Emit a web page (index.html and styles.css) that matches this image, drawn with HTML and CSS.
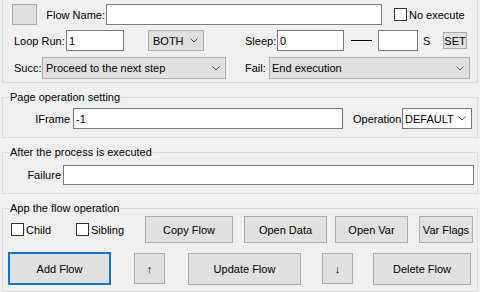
FILE: index.html
```html
<!DOCTYPE html>
<html lang="en">
<head>
  <meta charset="UTF-8" />
  <title>Flow</title>
  <link rel="stylesheet" href="styles.css">
</head>
<body>

  <div class="panel">
    <div class="row r1">
      <button class="btn sq"></button>
      <span class="lbl l-name">Flow Name:</span>
      <input class="txt t-name" type="text" value="">
      <span class="chk c-noexec"></span>
      <span class="chk-txt">No execute</span>
    </div>

    <div class="row r2">
      <span class="lbl l-loop">Loop Run:</span>
      <input class="txt t-loop" type="text" value="1">
      <div class="combo cb-both"><span>BOTH</span><svg width="8" height="5" viewBox="0 0 8 5"><polyline points="0.5,0.5 4,4 7.5,0.5" fill="none" stroke="#555" stroke-width="1"/></svg></div>
      <span class="lbl l-sleep">Sleep:</span>
      <input class="txt t-sleep" type="text" value="0">
      <div class="dash"></div>
      <input class="txt t-sleep2" type="text" value="">
      <span class="lbl l-s">S</span>
      <button class="btn b-set">SET</button>
    </div>

    <div class="row r3">
      <span class="lbl l-succ">Succ:</span>
      <div class="combo cb-succ"><span>Proceed to the next step</span><svg width="8" height="5" viewBox="0 0 8 5"><polyline points="0.5,0.5 4,4 7.5,0.5" fill="none" stroke="#555" stroke-width="1"/></svg></div>
      <span class="lbl l-fail">Fail:</span>
      <div class="combo cb-fail"><span>End execution</span><svg width="8" height="5" viewBox="0 0 8 5"><polyline points="0.5,0.5 4,4 7.5,0.5" fill="none" stroke="#555" stroke-width="1"/></svg></div>
    </div>
  </div>

  <fieldset class="grupo g-page">
    <legend>Page operation setting</legend>
    <div class="row r-page">
      <span class="lbl l-iframe">IFrame</span>
      <input class="txt t-iframe" type="text" value="-1">
      <span class="lbl l-oper">Operation</span>
      <div class="combo combo-blanco cb-oper"><span>DEFAULT</span><svg width="8" height="5" viewBox="0 0 8 5"><polyline points="0.5,0.5 4,4 7.5,0.5" fill="none" stroke="#555" stroke-width="1"/></svg></div>
    </div>
  </fieldset>

  <fieldset class="grupo g-after">
    <legend>After the process is executed</legend>
    <div class="row r-after">
      <span class="lbl l-fallo">Failure</span>
      <input class="txt t-fallo" type="text" value="">
    </div>
  </fieldset>

  <fieldset class="grupo g-app">
    <legend>App the flow operation</legend>
    <div class="row r-app1">
      <span class="chk c-child"></span>
      <span class="chk-txt x-child">Child</span>
      <span class="chk"></span>
      <span class="chk-txt x-sib">Sibling</span>
      <button class="btn b-copy">Copy Flow</button>
      <button class="btn b-data">Open Data</button>
      <button class="btn b-var">Open Var</button>
      <button class="btn b-flags">Var Flags</button>
    </div>
    <div class="row r-app2">
      <button class="btn btn-foco b-add">Add Flow</button>
      <button class="btn b-up">↑</button>
      <button class="btn b-update">Update Flow</button>
      <button class="btn b-down">↓</button>
      <button class="btn b-delete">Delete Flow</button>
    </div>
  </fieldset>

</body>
</html>
```

FILE: styles.css
```css
body {
  margin: 0;
  padding: 0;
  background: #f0f0f0;
  font-family: 'Liberation Sans', Arial, sans-serif;
  font-size: 11px;
  color: #000;
  width: 480px;
  height: 292px;
  overflow: hidden;
}

.panel {
  margin: -1px 2px 0;
  border: 1px solid #dcdcdc;
  padding: 4px 0 3px;
}

.row {
  display: flex;
  align-items: center;
}

.lbl {
  white-space: nowrap;
}

.txt {
  box-sizing: border-box;
  height: 21px;
  margin: 0;
  padding: 0 2px;
  border: 1px solid #7a7a7a;
  background: #fff;
  font-family: inherit;
  font-size: 11px;
  color: #000;
  outline: none;
}

.btn {
  box-sizing: border-box;
  margin: 0;
  padding: 0;
  border: 1px solid #adadad;
  background: #e1e1e1;
  font-family: inherit;
  font-size: 11px;
  color: #000;
  text-align: center;
}

.btn-foco {
  border: 2px solid #0078d7;
}

.combo {
  box-sizing: border-box;
  display: flex;
  align-items: center;
  justify-content: space-between;
  height: 21px;
  padding: 0 5px 0 3px;
  border: 1px solid #adadad;
  background: #e1e1e1;
}

.combo-blanco {
  background: #fff;
  border-color: #7a7a7a;
  padding-left: 2px;
}

.chk {
  box-sizing: border-box;
  width: 13px;
  height: 13px;
  border: 1px solid #333;
  background: #fff;
  flex-shrink: 0;
}

.chk-txt {
  margin-left: 2px;
}

/* fila 1 */
.r1 { height: 21px; }
.sq { margin-left: 9px; width: 25px; height: 21px; }
.l-name { width: 68px; text-align: right; }
.t-name { margin-left: 1px; width: 276px; }
.c-noexec { margin-left: 12px; }

/* fila 2 */
.r2 { margin-top: 5px; height: 21px; }
.l-loop { margin-left: 11px; width: 52px; }
.t-loop { width: 58px; }
.cb-both { margin-left: 24px; width: 56px; padding-left: 4px; }
.l-sleep { margin-left: 41px; width: 32px; }
.t-sleep { width: 67px; }
.dash { margin-left: 7px; width: 21px; border-top: 1px solid #000; }
.t-sleep2 { margin-left: 6px; width: 40px; }
.l-s { margin-left: 5px; width: 20px; }
.b-set { width: 24px; height: 17px; }

/* fila 3 */
.r3 { margin-top: 6px; height: 22px; }
.r3 .combo { height: 22px; }
.l-succ { margin-left: 11px; width: 28px; }
.cb-succ { width: 184px; }
.l-fail { margin-left: 19px; width: 24px; }
.cb-fail { width: 201px; padding-left: 2px; }

/* grupos */
.grupo {
  margin: 8px 2px 0;
  padding: 0;
  border: 1px solid #dcdcdc;
  min-width: 0;
}

.grupo legend {
  margin-left: 6px;
  padding: 0 1px;
  font-size: 11px;
  line-height: 13px;
}

.g-page { padding-bottom: 8px; }
.r-page { margin-top: 4px; height: 21px; }
.l-iframe { width: 67px; text-align: right; }
.t-iframe { margin-left: 3px; width: 270px; }
.l-oper { margin-left: 10px; width: 49px; }
.cb-oper { width: 70px; }

.g-after { padding-bottom: 8px; }
.r-after { margin-top: 6px; height: 20px; }
.l-fallo { width: 58px; text-align: right; }
.t-fallo { margin-left: 2px; width: 411px; height: 20px; }

.g-app { padding-bottom: 6px; }
.r-app1 { margin-top: 1px; height: 27px; }
.r-app1 .btn { height: 27px; }
.c-child { margin-left: 8px; }
.x-child { width: 50px; }
.x-sib { width: 54px; }
.b-copy { width: 88px; }
.b-data { margin-left: 11px; width: 83px; }
.b-var { margin-left: 8px; width: 73px; }
.b-flags { margin-left: 11px; width: 54px; }

.r-app2 { margin-top: 9px; height: 33px; }
.b-add { margin-left: 5px; width: 103px; height: 33px; }
.b-up { margin-left: 23px; width: 31px; height: 31px; }
.b-update { margin-left: 23px; width: 113px; height: 32px; }
.b-down { margin-left: 21px; width: 31px; height: 31px; }
.b-delete { margin-left: 20px; width: 98px; height: 32px; }
```
